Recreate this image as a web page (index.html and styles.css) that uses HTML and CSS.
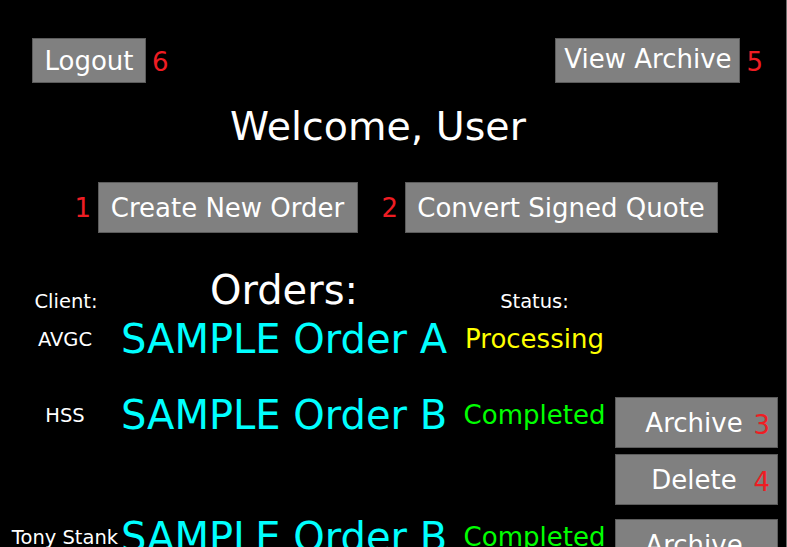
FILE: index.html
```html
<!DOCTYPE html>
<html lang="en">
<head>
<meta charset="utf-8">
<title>Orders</title>
<link rel="stylesheet" href="styles.css">
</head>
<body>
<div class="page">
  <header class="topbar">
    <div class="group">
      <button class="btn btn-top btn-logout">Logout</button><span class="tag tag-top">6</span>
    </div>
    <div class="group">
      <button class="btn btn-top btn-view">View Archive</button><span class="tag tag-top">5</span>
    </div>
  </header>

  <h1 class="welcome">Welcome, User</h1>

  <div class="actions">
    <span class="tag tag-lead">1</span><button class="btn btn-big btn-create">Create New Order</button>
    <span class="tag tag-lead">2</span><button class="btn btn-big btn-convert">Convert Signed Quote</button>
  </div>

  <section class="orders">
    <div class="orders-head">
      <div class="head-client">Client:</div>
      <div class="head-title">Orders:</div>
      <div class="head-status">Status:</div>
      <div></div>
    </div>

    <div class="order-row">
      <div class="cell cell-client">AVGC</div>
      <div class="cell cell-name">SAMPLE Order A</div>
      <div class="cell cell-status processing">Processing</div>
      <div class="cell-actions"></div>
    </div>

    <div class="order-row">
      <div class="cell cell-client">HSS</div>
      <div class="cell cell-name">SAMPLE Order B</div>
      <div class="cell cell-status completed">Completed</div>
      <div class="cell-actions">
        <button class="btn btn-row">Archive<span class="badge">3</span></button>
        <button class="btn btn-row">Delete<span class="badge">4</span></button>
      </div>
    </div>

    <div class="order-row">
      <div class="cell cell-client">Tony Stank</div>
      <div class="cell cell-name">SAMPLE Order B</div>
      <div class="cell cell-status completed">Completed</div>
      <div class="cell-actions">
        <button class="btn btn-row">Archive</button>
        <button class="btn btn-row">Delete</button>
      </div>
    </div>
  </section>
</div>
</body>
</html>
```

FILE: styles.css
```css
html, body {
  margin: 0;
  padding: 0;
  background: #000;
  overflow: hidden;
}

.page {
  width: 787px;
  height: 547px;
  box-sizing: border-box;
  border-right: 1px solid #6e6e6e;
  overflow: hidden;
  font-family: "DejaVu Sans", "Noto Sans", sans-serif;
  color: #fff;
}

.btn {
  font-family: inherit;
  font-size: 26px;
  line-height: normal;
  color: #fff;
  background: #808080;
  border: 1px solid #5c5c5c;
  margin: 0;
  padding: 0;
  box-sizing: border-box;
  display: inline-flex;
  align-items: center;
  justify-content: center;
  white-space: nowrap;
}

.tag {
  color: #ee1d23;
  font-size: 26px;
  line-height: normal;
}

/* top bar */
.topbar {
  display: flex;
  justify-content: space-between;
  align-items: center;
  padding: 38px 23px 0 32px;
}

.group {
  display: flex;
  align-items: center;
  gap: 6px;
}

.tag-top {
  margin-top: 3px;
}

.btn-top {
  height: 45px;
}

.btn-logout {
  width: 114px;
}

.btn-view {
  width: 185px;
  padding-bottom: 3px;
}

/* welcome */
.welcome {
  margin: 20px 0 0;
  padding-right: 30px;
  text-align: center;
  font-size: 39.5px;
  font-weight: normal;
  line-height: normal;
}

/* main actions */
.actions {
  display: flex;
  justify-content: center;
  align-items: center;
  margin-top: 33px;
  padding-left: 6px;
}

.tag-lead {
  margin-right: 6.5px;
}

.btn-big {
  height: 51px;
}

.btn-create {
  width: 260px;
  margin-right: 24px;
}

.btn-convert {
  width: 313px;
}

/* orders table */
.orders {
  margin-top: 34px;
  padding-left: 8px;
}

.orders-head,
.order-row {
  display: grid;
  grid-template-columns: 114px 324px 169px 163px;
}

.orders-head {
  align-items: end;
  margin-bottom: 3px;
}

.head-client,
.head-status {
  font-size: 19.5px;
  line-height: normal;
  text-align: center;
}

.head-client {
  padding-left: 2px;
}

.head-status {
  padding-left: 8px;
}

.head-title {
  font-size: 40px;
  line-height: normal;
  text-align: center;
}

.order-row {
  align-items: start;
  min-height: 76px;
  padding-bottom: 9px;
  box-sizing: border-box;
}

.cell {
  height: 46px;
  display: flex;
  align-items: center;
  justify-content: center;
  white-space: nowrap;
}

.cell-client {
  font-size: 19.5px;
}

.cell-name {
  font-size: 40px;
  color: #00ffff;
}

.cell-status {
  font-size: 26px;
  padding-left: 8px;
}

.processing {
  color: #ffff00;
}

.completed {
  color: #00ff00;
}

.cell-actions {
  display: flex;
  flex-direction: column;
  gap: 6px;
  padding-top: 5px;
}

.btn-row {
  position: relative;
  width: 163px;
  height: 51px;
  padding-right: 5px;
}

.badge {
  position: absolute;
  right: 7px;
  top: 0;
  bottom: 0;
  padding-top: 4px;
  display: flex;
  align-items: center;
  color: #ee1d23;
}
```
